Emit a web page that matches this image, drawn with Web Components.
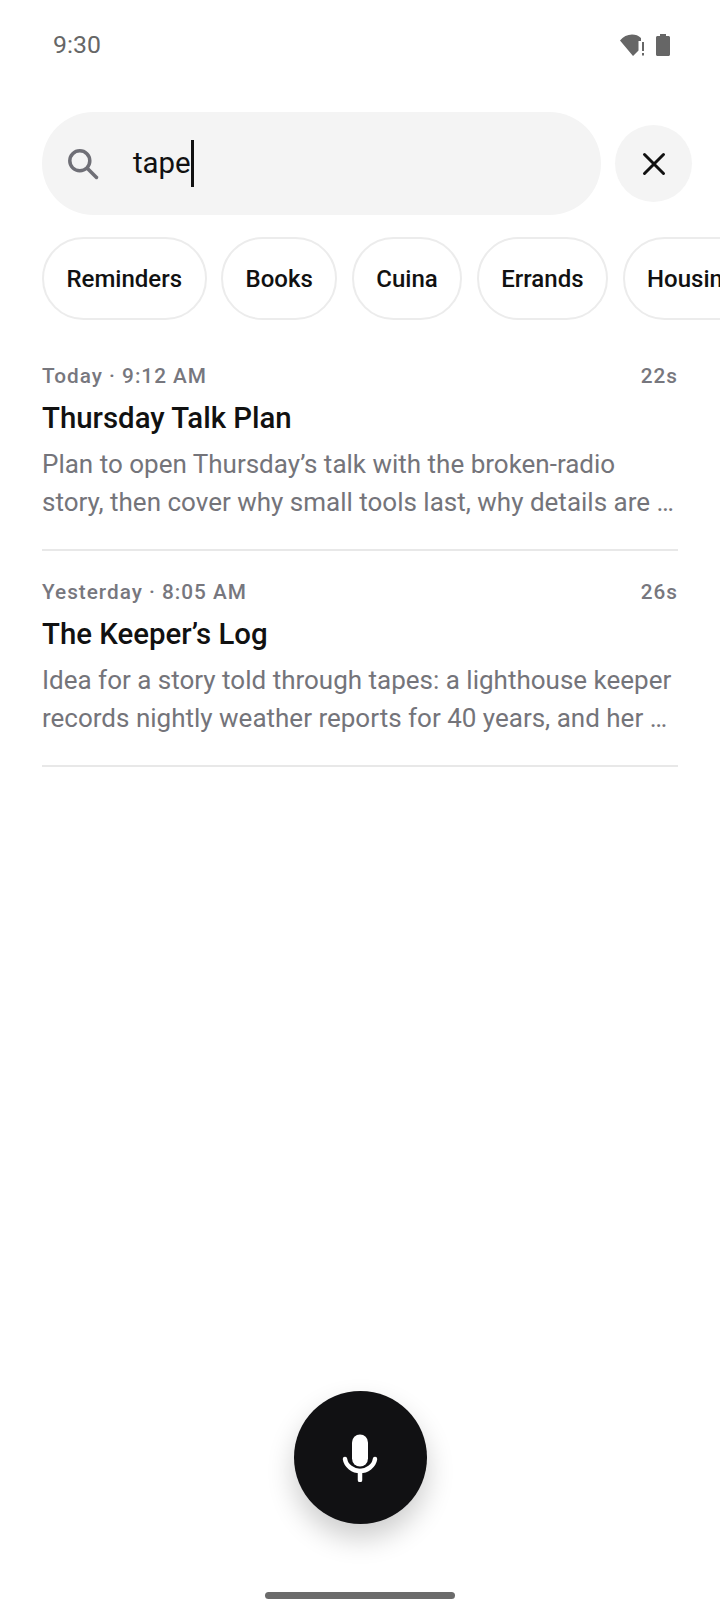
<!DOCTYPE html>
<html lang="en">
<head>
    <meta charset="UTF-8">
    <meta name="viewport" content="width=device-width, initial-scale=1.0">
    <title>Search</title>
    <style>
        html, body { margin: 0; background: #fff; }
        body { font-family: Roboto, "Liberation Sans", sans-serif; }
    </style>
</head>
<body>
    <app-screen>
        <status-bar slot="top" time="9:30"></status-bar>
        <search-row slot="top" query="tape"></search-row>
        <chip-row slot="top">
            <filter-chip>Reminders</filter-chip>
            <filter-chip>Books</filter-chip>
            <filter-chip>Cuina</filter-chip>
            <filter-chip>Errands</filter-chip>
            <filter-chip>Housing</filter-chip>
        </chip-row>
        <memo-item when="Today · 9:12 AM" length="22s" heading="Thursday Talk Plan">Plan to open Thursday’s talk with the broken-radio story, then cover why small tools last, why details are …</memo-item>
        <memo-item when="Yesterday · 8:05 AM" length="26s" heading="The Keeper’s Log">Idea for a story told through tapes: a lighthouse keeper records nightly weather reports for 40 years, and her …</memo-item>
        <record-button slot="bottom"></record-button>
    </app-screen>

    <script>
        class AppScreen extends HTMLElement {
            constructor() {
                super();
                this.attachShadow({ mode: "open" });
                this.shadowRoot.innerHTML = `
                    <style>
                        :host { display: flex; flex-direction: column; width: 720px; height: 1616px; overflow: hidden; background: #fff; }
                        main { padding: 0 42px; margin-top: 41px; }
                        footer { margin-top: auto; display: flex; flex-direction: column; align-items: center; }
                        .home { width: 190px; height: 7px; border-radius: 4px; background: #6b6b6b; margin: 68px 0 17px; }
                    </style>
                    <slot name="top"></slot>
                    <main><slot></slot></main>
                    <footer>
                        <slot name="bottom"></slot>
                        <div class="home"></div>
                    </footer>
                `;
            }
        }

        class StatusBar extends HTMLElement {
            constructor() {
                super();
                this.attachShadow({ mode: "open" });
                this.shadowRoot.innerHTML = `
                    <style>
                        :host { display: flex; align-items: center; justify-content: space-between; height: 46px; padding: 22px 50px 0 53px; color: #666; }
                        span { font-size: 24.800px; line-height: 46px; }
                        .icons { display: flex; align-items: center; gap: 10px; }
                        svg { display: block; fill: #666; }
                    </style>
                    <span></span>
                    <div class="icons">
                        <svg width="26" height="24" viewBox="0 0 26 24">
                            <path d="M0 7.500C3 3.500 7.500 1.500 12 1.500c3.500 0 6.500 1 9 3.500v3h-2.500v9.500L13 23z"/>
                            <path d="M22 9h2v9h-2zM22 20h2v2.500h-2z"/>
                        </svg>
                        <svg width="14" height="22" viewBox="0 0 14 22">
                            <path d="M4 0h6v2h2.500c.8 0 1.500.7 1.500 1.500V20.500c0 .8-.7 1.500-1.500 1.500h-11C.7 22 0 21.300 0 20.500V3.500C0 2.700.7 2 1.500 2H4z"/>
                        </svg>
                    </div>
                `;
                this.shadowRoot.querySelector("span").textContent = this.getAttribute("time");
            }
        }

        class SearchRow extends HTMLElement {
            constructor() {
                super();
                this.attachShadow({ mode: "open" });
                this.shadowRoot.innerHTML = `
                    <style>
                        :host { display: flex; align-items: center; gap: 14px; padding: 44px 0 0 42px; }
                        .field { display: flex; align-items: center; width: 559px; height: 103px; border-radius: 52px; background: #f4f4f4; box-sizing: border-box; padding-left: 25px; }
                        .field svg { display: block; flex: none; }
                        .query { margin-left: 34px; padding-bottom: 2px; font-size: 29.400px; color: #111; line-height: 46px; }
                        .caret { width: 3.500px; height: 47px; background: #111; }
                        .close { display: flex; align-items: center; justify-content: center; width: 77px; height: 77px; border-radius: 50%; background: #f4f4f4; }
                    </style>
                    <div class="field">
                        <svg width="32" height="32" viewBox="0 0 32 32" fill="none" stroke="#6f6f76" stroke-width="3.500" stroke-linecap="round">
                            <circle cx="12.800" cy="12.800" r="10"/>
                            <path d="M20.500 20.500l9 9"/>
                        </svg>
                        <span class="query"></span>
                        <div class="caret"></div>
                    </div>
                    <div class="close">
                        <svg width="24" height="24" viewBox="0 0 24 24" fill="none" stroke="#111" stroke-width="3" stroke-linecap="round">
                            <path d="M2.500 2.500l19 19M21.500 2.500l-19 19"/>
                        </svg>
                    </div>
                `;
                this.shadowRoot.querySelector(".query").textContent = this.getAttribute("query");
            }
        }

        class ChipRow extends HTMLElement {
            constructor() {
                super();
                this.attachShadow({ mode: "open" });
                this.shadowRoot.innerHTML = `
                    <style>
                        :host { display: flex; gap: 14.500px; padding: 22px 0 0 42px; overflow: hidden; }
                    </style>
                    <slot></slot>
                `;
            }
        }

        class FilterChip extends HTMLElement {
            constructor() {
                super();
                this.attachShadow({ mode: "open" });
                this.shadowRoot.innerHTML = `
                    <style>
                        :host { display: block; flex: none; box-sizing: border-box; height: 83px; padding: 0 22.500px; border: 2px solid #ececec; border-radius: 42px; background: #fff; font-size: 24px; font-weight: 500; line-height: 81px; color: #111; white-space: nowrap; }
                    </style>
                    <slot></slot>
                `;
            }
        }

        class MemoItem extends HTMLElement {
            constructor() {
                super();
                this.attachShadow({ mode: "open" });
                this.shadowRoot.innerHTML = `
                    <style>
                        :host { display: block; box-sizing: border-box; border-bottom: 2px solid #e8e8e8; padding-bottom: 28px; margin-bottom: 26px; }
                        .meta { display: flex; justify-content: space-between; font-size: 20.750px; font-weight: 500; line-height: 30px; letter-spacing: 1px; color: #77777e; }
                        h3 { margin: 5px 0 0; font-size: 29.400px; line-height: 44px; font-weight: 500; color: #111; }
                        p { margin: 6px 0 0; font-size: 26px; line-height: 37.500px; color: #74747a; }
                    </style>
                    <div class="meta"><span class="when"></span><span class="length"></span></div>
                    <h3></h3>
                    <p><slot></slot></p>
                `;
                this.shadowRoot.querySelector(".when").textContent = this.getAttribute("when");
                this.shadowRoot.querySelector(".length").textContent = this.getAttribute("length");
                this.shadowRoot.querySelector("h3").textContent = this.getAttribute("heading");
            }
        }

        class RecordButton extends HTMLElement {
            constructor() {
                super();
                this.attachShadow({ mode: "open" });
                this.shadowRoot.innerHTML = `
                    <style>
                        :host { display: flex; align-items: center; justify-content: center; width: 133px; height: 133px; border-radius: 50%; background: #111113; box-shadow: 0 14px 28px rgba(0,0,0,.2); }
                        svg { display: block; }
                    </style>
                    <svg width="36" height="48" viewBox="0 0 36 48" fill="none">
                        <rect x="10" y="0.500" width="16" height="32" rx="8" fill="#fff"/>
                        <path d="M3 25c1 7 8 12 15 12s14-5 15-12" stroke="#fff" stroke-width="4.500" stroke-linecap="round"/>
                        <path d="M18 37v9" stroke="#fff" stroke-width="4.500" stroke-linecap="round"/>
                    </svg>
                `;
            }
        }

        customElements.define("app-screen", AppScreen);
        customElements.define("status-bar", StatusBar);
        customElements.define("search-row", SearchRow);
        customElements.define("chip-row", ChipRow);
        customElements.define("filter-chip", FilterChip);
        customElements.define("memo-item", MemoItem);
        customElements.define("record-button", RecordButton);
    </script>
</body>
</html>
